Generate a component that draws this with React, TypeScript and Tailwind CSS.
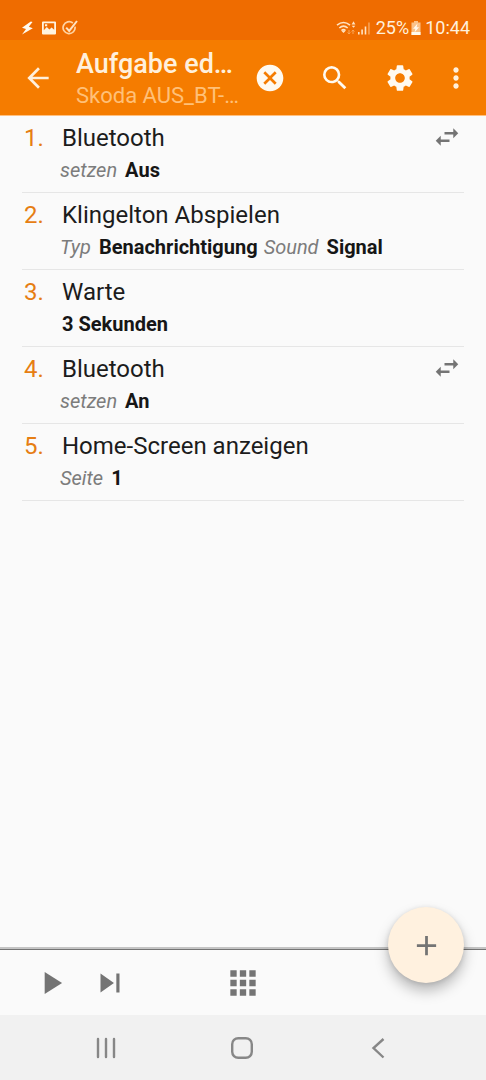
import React from "react";
import {
  MdAdd,
  MdApps,
  MdArrowBack,
  MdCancel,
  MdMoreVert,
  MdPlayArrow,
  MdSearch,
  MdSettings,
  MdSkipNext,
  MdSwapHoriz,
} from "react-icons/md";

type Param = { label?: string; value: string };
type Action = { title: string; params: Param[]; swap?: boolean };

const actions: Action[] = [
  { title: "Bluetooth", params: [{ label: "setzen", value: "Aus" }], swap: true },
  {
    title: "Klingelton Abspielen",
    params: [
      { label: "Typ", value: "Benachrichtigung" },
      { label: "Sound", value: "Signal" },
    ],
  },
  { title: "Warte", params: [{ value: "3 Sekunden" }] },
  { title: "Bluetooth", params: [{ label: "setzen", value: "An" }], swap: true },
  { title: "Home-Screen anzeigen", params: [{ label: "Seite", value: "1" }] },
];

function StatusBar() {
  return (
    <div className="flex h-10 items-end justify-between bg-[#ef6c00] pr-4 pl-5 text-[#fff0dc]">
      <div className="flex h-6 items-center gap-[5px]">
        <svg className="h-4 w-4" viewBox="0 0 16 16" fill="#fffaf0" aria-hidden="true">
          <path d="M10.8 1.500 2 7.800l4 1.300L2 14.500l10.800-6.300-4-1.400L12.500 2z" />
        </svg>
        <svg className="h-4 w-4" viewBox="0 0 16 16" aria-hidden="true">
          <path
            fill="#fff3e0"
            fillRule="evenodd"
            d="M2 1.5h12a1 1 0 0 1 1 1v11a1 1 0 0 1-1 1H2a1 1 0 0 1-1-1v-11a1 1 0 0 1 1-1zM2.8 3.3v6.9l3-3.1 2.6 2.3 2.2-2 2.6 2.4V3.3zM4 4.2h2.2v2H4z"
          />
        </svg>
        <svg className="h-4 w-4" viewBox="0 0 16 16" fill="none" aria-hidden="true">
          <path d="M10.9 3A6 6 0 1 0 13 6.6" stroke="#ffd3a3" strokeWidth="1.7" />
          <path d="m4.2 7.6 3 3.3L15 1" stroke="#ffe3c2" strokeWidth="2" />
        </svg>
      </div>
      <div className="flex h-6 items-center text-lg leading-6">
        <svg className="h-4 w-5" viewBox="0 0 20 16" fill="none" stroke="#ffe3c2" aria-hidden="true">
          <path d="M1 5.2q6.5-5.4 13 0M3.3 8q4.2-3.6 8.4 0M5.5 10.6q2-1.8 4 0" strokeWidth="1.6" />
          <path d="m5.700 11.200 1.800 1.800 1.800-1.800-1.800-1z" fill="#ffe3c2" stroke="none" />
          <path d="m17.500 1.200 1.900 3.200h-3.800zM15.700 5.800h3.600l-1.800 2z" fill="#ffe3c2" stroke="none" />
          <path d="M13 10v4m-1.4-1.5L13 14l1.4-1.5M17 14v-4m-1.4 1.500L17 10l1.400 1.500" stroke="#f9a559" />
        </svg>
        <svg className="ml-0.5 h-4 w-3" viewBox="0 0 12 16" aria-hidden="true">
          <path fill="#ffe3c2" d="M0 12h1.600v2.500H0zM3.300 9.500h1.600v5H3.300zM6.700 6.500h1.600v8H6.700z" />
          <path fill="#f9a559" d="M10.200 2.500h1.500v12h-1.500z" />
        </svg>
        <span className="ml-1.5">25%</span>
        <svg className="mx-px h-4 w-3" viewBox="0 0 12 16" aria-hidden="true">
          <path fill="#fbc28a" d="M4 1h4v1.500h2.500V15h-9V2.500H4z" />
          <path fill="#fffaf0" d="M1.500 12h9v3h-9z" />
          <path fill="#fffaf0" d="M7.500 3.500 3 8.800h2.400l-.9 3.700L9 7.200H6.600z" />
        </svg>
        <span className="ml-0.5">10:44</span>
      </div>
    </div>
  );
}

function Header() {
  const button = "flex h-full shrink-0 items-center justify-center";
  return (
    <header className="flex h-[76px] items-center border-b border-[#ffc080] bg-[#f57c00] pr-1.5 text-[#fffaf0]">
      <button aria-label="Zurück" className={`${button} w-[76px] text-[#fff0dc]`}>
        <MdArrowBack size={32} />
      </button>
      <div className="min-w-0 flex-1 pt-1 whitespace-nowrap">
        <h1 className="text-[27px] leading-8 font-medium text-[#fff0dc]">Aufgabe ed…</h1>
        <p className="text-[22px] leading-8 text-[#ffc078]">Skoda AUS_BT-…</p>
      </div>
      <button aria-label="Abbrechen" className={`${button} w-[65px]`}>
        <MdCancel size={32} />
      </button>
      <button aria-label="Suchen" className={`${button} w-[65px]`}>
        <MdSearch size={32} />
      </button>
      <button aria-label="Einstellungen" className={`${button} w-[65px]`}>
        <MdSettings size={32} />
      </button>
      <button aria-label="Mehr" className={`${button} w-12 text-[#fff0dc]`}>
        <MdMoreVert size={32} />
      </button>
    </header>
  );
}

function ActionRow({ action, index }: { action: Action; index: number }) {
  return (
    <li className="flex h-[77px] border-b border-[#e6e6e6] pt-1.5">
      <span className="w-10 shrink-0 pl-0.5 text-2xl leading-8 text-[#e67e13]">{index + 1}.</span>
      <div className="min-w-0 flex-1">
        <h2 className="text-2xl leading-8 text-[#1c1c1c]">{action.title}</h2>
        <p className="-ml-0.5 flex gap-1.5 text-xl leading-8 whitespace-nowrap">
          {action.params.map((p) => (
            <span key={p.value} className="flex gap-2">
              {p.label ? <em className="text-[#7c7c7c]">{p.label}</em> : null}
              <strong className={p.label ? "font-bold text-[#161616]" : "pl-0.5 font-bold text-[#161616]"}>
                {p.value}
              </strong>
            </span>
          ))}
        </p>
      </div>
      {action.swap ? (
        <MdSwapHoriz size={30} className="mr-0.5 shrink-0 text-[#747474]" />
      ) : null}
    </li>
  );
}

function Toolbar() {
  return (
    <div className="relative grid h-[68px] grid-cols-[1fr_auto_1fr] items-center border-t-2 border-[#c4c4c4] bg-[#fafafa] pt-0.5 text-[#747474] shadow-[inset_0_1px_0_#747474]">
      <div className="flex items-center gap-[21px] pl-8">
        <button aria-label="Abspielen">
          <MdPlayArrow size={38} />
        </button>
        <button aria-label="Nächster Schritt">
          <MdSkipNext size={38} />
        </button>
      </div>
      <button aria-label="Symbol wählen">
        <MdApps size={38} />
      </button>
      <button
        aria-label="Aktion hinzufügen"
        className="absolute right-[22px] bottom-8 flex size-[76px] items-center justify-center rounded-full bg-[#fff1df] shadow-[0_8px_14px_rgba(0,0,0,0.26),0_1px_5px_rgba(0,0,0,0.12)]"
      >
        <MdAdd size={33} />
      </button>
    </div>
  );
}

function NavigationBar() {
  return (
    <nav className="flex h-[65px] items-center justify-center gap-[104px] bg-[#f1f1f1] pr-0.5 text-[#878787]">
      <button aria-label="Letzte Apps">
        <svg className="size-8" viewBox="0 0 32 32" fill="none" stroke="currentColor" strokeWidth="2.4" strokeLinecap="round">
          <path d="M8 7v18M16 7v18M24 7v18" />
        </svg>
      </button>
      <button aria-label="Startbildschirm">
        <svg className="size-8" viewBox="0 0 32 32" fill="none" stroke="currentColor" strokeWidth="2.4">
          <rect x="6.200" y="6.200" width="19.600" height="19.600" rx="6" />
        </svg>
      </button>
      <button aria-label="Zurück">
        <svg className="size-8" viewBox="0 0 32 32" fill="none" stroke="currentColor" strokeWidth="2.4">
          <path d="M21.500 7 11.500 16l10 9.500" />
        </svg>
      </button>
    </nav>
  );
}

export default function App() {
  return (
    <div className="flex min-h-screen flex-col bg-[#fafafa] font-['Roboto',sans-serif]">
      <StatusBar />
      <Header />
      <main className="flex-1 px-[22px]">
        <ol>
          {actions.map((action, i) => (
            <ActionRow key={i} action={action} index={i} />
          ))}
        </ol>
      </main>
      <Toolbar />
      <NavigationBar />
    </div>
  );
}
